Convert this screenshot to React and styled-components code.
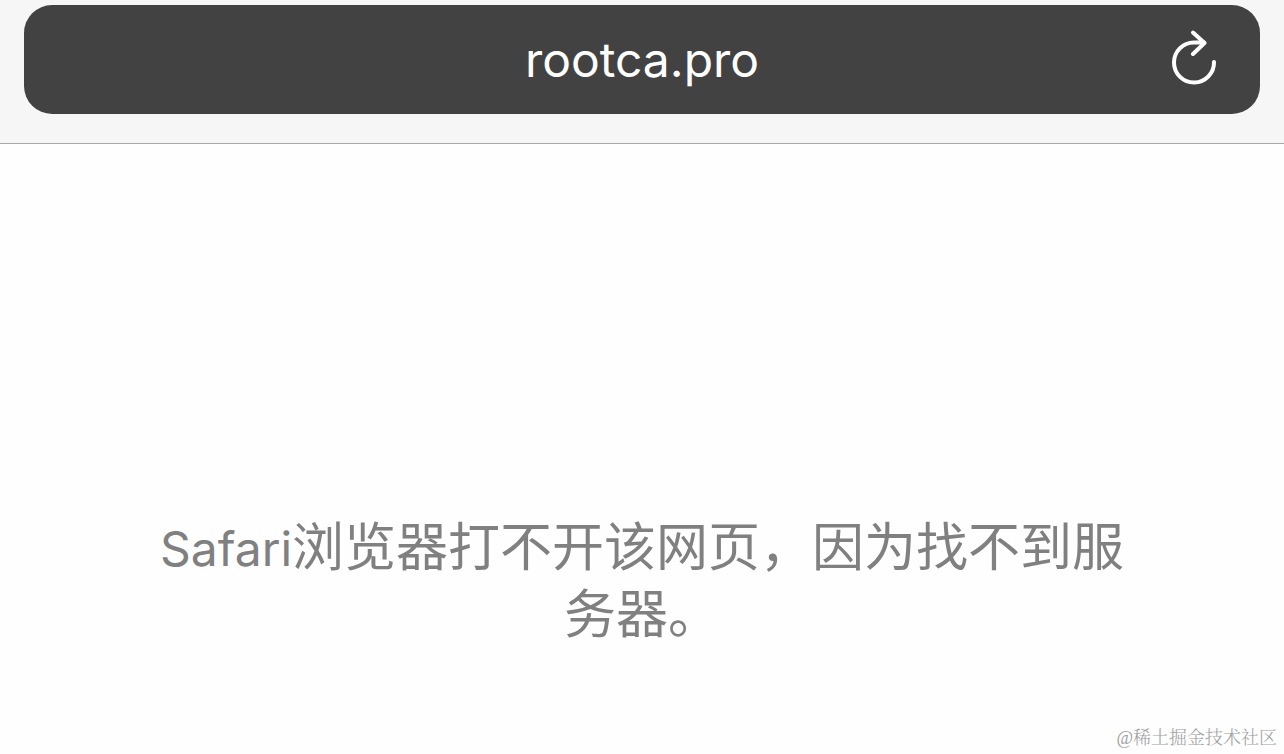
import React, { useState } from 'react';
import styled, { createGlobalStyle } from 'styled-components';

const GlobalStyle = createGlobalStyle`
  body {
    margin: 0;
    background-color: #fefefe;
    font-family: Inter, 'Noto Sans CJK SC', sans-serif;
  }
`;

const Page = styled.div`
  min-height: 100vh;
  display: flex;
  flex-direction: column;
`;

const Toolbar = styled.header`
  padding: 5px 24px 29px;
  background-color: #f6f6f6;
  border-bottom: 1px solid #a8a8a8;
`;

const AddressBar = styled.form`
  display: grid;
  grid-template-columns: 132px 1fr 132px;
  align-items: center;
  height: 109px;
  border-radius: 28px;
  background-color: #424242;
`;

const AddressInput = styled.input`
  grid-column: 2;
  min-width: 0;
  padding: 0;
  border: none;
  outline: none;
  background: transparent;
  color: #fff;
  font-family: inherit;
  font-size: 48px;
  line-height: 64px;
  text-align: center;
`;

const ReloadButton = styled.button`
  display: flex;
  justify-content: center;
  padding: 0;
  border: none;
  background: transparent;
  color: #fff;
  cursor: pointer;
`;

const Content = styled.main`
  flex: 1;
  padding: 371px 12% 0;
`;

const Message = styled.p`
  margin: 0;
  color: #808080;
  font-size: 52px;
  line-height: 66px;
  text-align: center;
`;

const Latin = styled.span`
  font-size: 48px;
`;

const Footer = styled.footer`
  padding: 0 7px 4px;
  color: #a0a0a0;
  font-family: 'Liberation Serif', 'Noto Serif CJK SC', 'Noto Sans CJK SC', serif;
  font-size: 18px;
  font-weight: 300;
  line-height: 24px;
  text-align: right;
`;

const ReloadIcon = () => (
  <svg
    width="48"
    height="60"
    viewBox="0 0 48 60"
    fill="none"
    stroke="currentColor"
    strokeWidth="4"
    strokeLinecap="round"
    strokeLinejoin="round"
    aria-hidden="true"
  >
    <path d="M44 32A20 20 0 1 1 24 12.5H34" />
    <path d="M23 2.5L34.5 13L23 24" />
  </svg>
);

const App = () => {
  const [address, setAddress] = useState('rootca.pro');

  return (
    <Page>
      <GlobalStyle />
      <Toolbar>
        <AddressBar onSubmit={(e) => e.preventDefault()}>
          <AddressInput
            type="text"
            aria-label="Address"
            value={address}
            onChange={(e) => setAddress(e.target.value)}
          />
          <ReloadButton type="submit" aria-label="Reload">
            <ReloadIcon />
          </ReloadButton>
        </AddressBar>
      </Toolbar>

      <Content>
        <Message lang="zh-CN">
          <Latin>Safari</Latin>浏览器打不开该网页，因为找不到服务器。
        </Message>
      </Content>

      <Footer lang="zh-CN">@稀土掘金技术社区</Footer>
    </Page>
  );
};

export default App;
